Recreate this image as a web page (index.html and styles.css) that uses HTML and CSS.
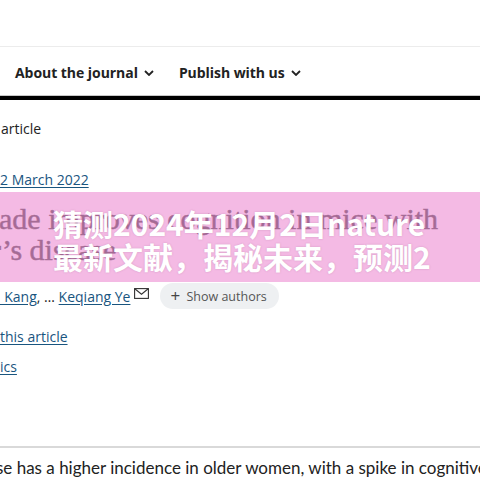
FILE: index.html
```html
<!DOCTYPE html>
<html lang="en">
<head>
<meta charset="utf-8">
<title>nature</title>
<link rel="stylesheet" href="styles.css">
</head>
<body>
<div class="page">
  <div class="topbar"></div>
  <nav class="nav">
    <span class="nav-item">About the journal<svg class="chev" viewBox="0 0 10 6" width="10" height="6"><path d="M1 1l4 4 4-4" fill="none" stroke="#222" stroke-width="1.8"/></svg></span>
    <span class="nav-item">Publish with us<svg class="chev" viewBox="0 0 10 6" width="10" height="6"><path d="M1 1l4 4 4-4" fill="none" stroke="#222" stroke-width="1.8"/></svg></span>
  </nav>
  <main class="main">
    <div class="type">article</div>
    <div class="date"><a href="#">2 March 2022</a></div>
    <h1 class="title"><span class="l1">ade improves cognition in mice with</span><span class="l2">r’s disease</span></h1>
    <div class="authors">
      <a href="#" class="auth">, Kang</a>, … <a href="#" class="auth">Keqiang Ye</a>
      <svg class="mail" viewBox="0 0 15 11" width="15" height="11"><rect x="0.6" y="0.6" width="13.8" height="9.8" fill="none" stroke="#333" stroke-width="1.1"/><path d="M0.8 0.8l6.7 5.4 6.7-5.4" fill="none" stroke="#333" stroke-width="1.1"/></svg>
      <span class="show"><span class="plus">+</span> Show authors</span>
    </div>
    <div class="cite"><a href="#">this article</a></div>
    <div class="metrics"><a href="#">ics</a></div>
    <hr class="rule">
    <p class="body">se has a higher incidence in older women, with a spike in cognitive</p>
  </main>
  <div class="banner">
    <div class="banner-text">
      <span class="bl">猜测2024年12月2日nature</span>
      <span class="bl">最新文献，揭秘未来，预测2</span>
    </div>
  </div>
</div>
</body>
</html>
```
FILE: styles.css
```css
html, body {
  margin: 0;
  padding: 0;
  background: #fff;
  overflow: hidden;
}
.page {
  position: relative;
  width: 480px;
  height: 480px;
  overflow: hidden;
  font-family: "Open Sans", "Noto Sans", sans-serif;
  color: #222;
}
.topbar {
  height: 46px;
  border-bottom: 1px solid #ececec;
}
.nav {
  display: flex;
  align-items: center;
  gap: 25px;
  height: 49px;
  padding: 3px 0 0 15px;
  box-sizing: border-box;
  border-bottom: 1px solid #c8c8c8;
  box-shadow: 0 4px 0 #000;
  margin-bottom: 4px;
}
.nav-item {
  display: flex;
  align-items: center;
  gap: 6px;
  font-size: 14px;
  font-weight: 700;
  color: #222;
  letter-spacing: -0.05px;
}
.chev { margin-top: 1px; }
.main {
  display: flex;
  flex-direction: column;
}
a { color: #19557f; text-decoration: underline; text-underline-offset: 2px; }
.type {
  margin-top: 19px;
  font-size: 14px;
  line-height: 20px;
  padding-left: 1px;
}
.date {
  margin-top: 31px;
  font-size: 14px;
  line-height: 20px;
}
.title {
  margin: 13px 0 0;
  font-family: "Liberation Serif", "DejaVu Serif", serif;
  font-weight: 400;
  font-size: 30px;
  line-height: 31px;
  color: #1a1a1a;
  -webkit-text-stroke: 0.5px #1a1a1a;
  white-space: nowrap;
}
.title span { display: block; }
.title .l1 { margin-left: -1px; }
.title .l2 { margin-left: -9px; }
.authors {
  display: flex;
  align-items: center;
  margin-top: 18px;
  height: 26px;
  font-size: 14px;
  white-space: pre;
  margin-left: -3px;
}
.auth { color: #19557f; }
.mail { margin: -6px 0 0 4px; }
.show {
  margin-left: 11px;
  background: #eef0f2;
  border-radius: 13px;
  height: 26px;
  padding: 0 12px 0 10px;
  display: flex;
  align-items: center;
  font-size: 12.5px;
  color: #555;
}
.plus { font-size: 17px; margin-right: 3px; color: #444; line-height: 1; margin-top: -2px; }
.cite {
  margin-top: 18px;
  font-size: 14px;
  line-height: 20px;
}
.metrics {
  margin-top: 10px;
  font-size: 14px;
  line-height: 20px;
}
.rule {
  margin: 69px 0 0;
  border: 0;
  height: 2px;
  background: #d9d9d9;
}
.body {
  margin: 8px 0 0;
  font-family: "Lato", "Open Sans", sans-serif;
  font-size: 17px;
  letter-spacing: 0;
  line-height: 24px;
  white-space: nowrap;
  margin-left: -4px;
  color: #222;
}
.banner {
  position: absolute;
  left: 0;
  top: 192px;
  width: 480px;
  height: 90px;
  background: rgba(238, 150, 214, 0.66);
  overflow: hidden;
}
.banner-text {
  display: flex;
  flex-direction: column;
  padding: 15px 0 0 53px;
  font-family: "Noto Sans CJK SC", "Noto Sans", sans-serif;
  font-weight: 700;
  font-size: 30px;
  line-height: 33px;
  color: #fff;
  white-space: nowrap;
  text-shadow: 0 0 2px rgba(120, 60, 100, 0.25);
}
```
